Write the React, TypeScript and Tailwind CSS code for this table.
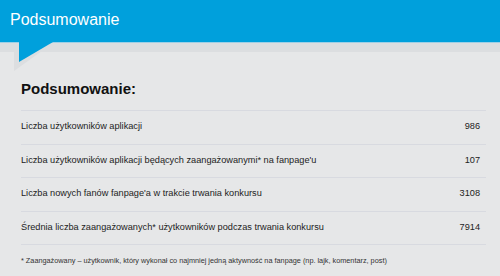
const rows = [
  { label: "Liczba użytkowników aplikacji", value: "986" },
  { label: "Liczba użytkowników aplikacji będących zaangażowanymi* na fanpage'u", value: "107" },
  { label: "Liczba nowych fanów fanpage'a w trakcie trwania konkursu", value: "3108" },
  { label: "Średnia liczba zaangażowanych* użytkowników podczas trwania konkursu", value: "7914" },
];

export default function App() {
  return (
    <div className="relative w-[500px] h-[276px] overflow-hidden bg-[#e6e7e8] font-['Liberation_Sans',Arial,sans-serif]">
      <header className="h-[43px] bg-[#00a0dc] border-b border-[#9fd0e6] pl-[10px] pt-[12px]">
        <h1 className="text-[16px] leading-none text-white">Podsumowanie</h1>
      </header>
      <div className="h-[9px] bg-[#dcdee0]" />

      {/* speech-bubble pointer under the header */}
      <svg className="absolute left-[14px] top-[42px]" width="40" height="30" viewBox="0 0 40 30">
        <polygon points="0,1 39,1 0,29" fill="#dcdee0" />
        <polygon points="5,0 39,0 5,20" fill="#00a0dc" />
      </svg>

      <main className="pl-[21px] pr-[14px] pt-[29px]">
        <h2 className="text-[15px] leading-none font-bold text-[#111]">Podsumowanie:</h2>
        <ul className="mt-[14px] border-t border-[#d8dae0]">
          {rows.map((r) => (
            <li
              key={r.value}
              className="flex h-[33.5px] items-center justify-between border-b border-[#d8dae0] pr-[6px] text-[9.2px] text-[#222]"
            >
              <span>{r.label}</span>
              <span>{r.value}</span>
            </li>
          ))}
        </ul>
        <p className="pt-[11px] text-[7.3px] leading-[10px] text-[#333]">
          * Zaangażowany – użytkownik, który wykonał co najmniej jedną aktywność na fanpage (np. lajk, komentarz, post)
        </p>
      </main>
    </div>
  );
}
